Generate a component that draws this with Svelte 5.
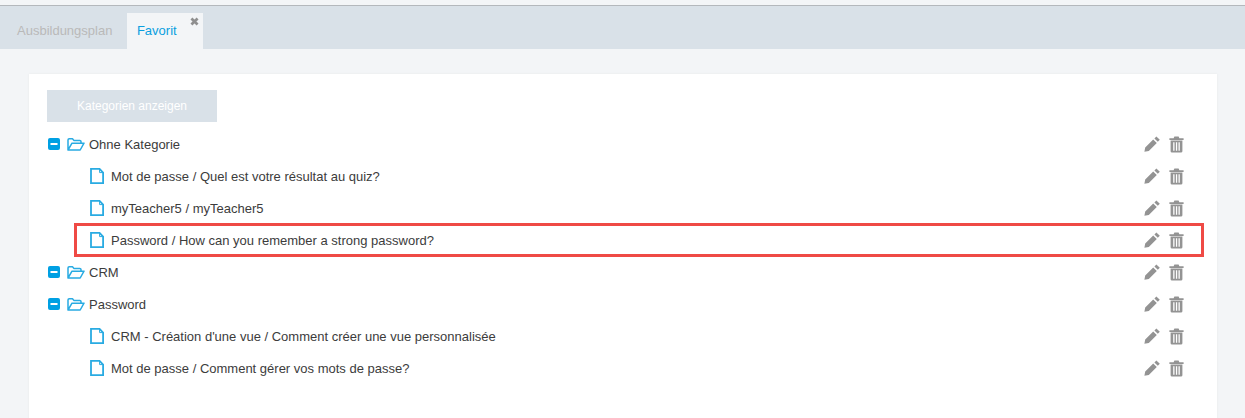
<script>
  const rows = [
    { label: 'Ohne Kategorie', folder: true },
    { label: 'Mot de passe / Quel est votre résultat au quiz?' },
    { label: 'myTeacher5 / myTeacher5' },
    { label: 'Password / How can you remember a strong password?', marked: true },
    { label: 'CRM', folder: true },
    { label: 'Password', folder: true },
    { label: "CRM - Création d'une vue / Comment créer une vue personnalisée" },
    { label: 'Mot de passe / Comment gérer vos mots de passe?' }
  ];
</script>

<div class="page">
  <nav class="tabs">
    <span class="tab">Ausbildungsplan</span>
    <span class="tab active">
      Favorit
      <svg class="close" viewBox="0 0 10 10" width="9" height="9" aria-hidden="true">
        <path d="M1.6 1.6 8.4 8.4M8.4 1.6 1.6 8.4" stroke="#8f8f8f" stroke-width="3" fill="none" />
      </svg>
    </span>
  </nav>

  <main class="content">
    <section class="card">
      <button class="toggle" type="button">Kategorien anzeigen</button>

      <ul class="tree">
        {#each rows as row}
          <li class="row" class:child={!row.folder} class:marked={row.marked}>
            {#if row.folder}
              <svg class="minus" viewBox="0 0 12 12" width="12" height="12" aria-hidden="true">
                <rect width="12" height="12" rx="2" fill="#00a0e3" />
                <rect x="2.5" y="5" width="7" height="2" fill="#fff" />
              </svg>
              <svg class="folder" viewBox="0 0 18 13" width="18" height="13" aria-hidden="true">
                <path d="M1 12V2q0-1.2 1.2-1.2h3.3l1.3 1.6h6q1.2 0 1.2 1.2v1.6M1 12h12.2l3.8-6.8H5z" fill="none" stroke="#29abe2" stroke-width="1.5" stroke-linejoin="round" />
              </svg>
            {:else}
              <svg class="file" viewBox="0 0 14 16" width="14" height="16" aria-hidden="true">
                <path d="M1 .9h8.6l3.5 3.6v10.6H1z" fill="none" stroke="#29abe2" stroke-width="1.8" />
                <path d="M9.6 1v3.6h3.4" fill="none" stroke="#29abe2" stroke-width="1" />
              </svg>
            {/if}
            <span class="label">{row.label}</span>
            <span class="actions">
              <svg viewBox="0 0 16 16" width="16" height="16" aria-hidden="true">
                <path d="M12.4.4 15.8 3.8 13.8 5.8 10.4 2.4ZM9.2 3.4 12.8 7 4.8 15 .4 15.8 1.2 11.4Z" fill="#939393" />
              </svg>
              <svg viewBox="0 0 15 17" width="15" height="17" aria-hidden="true">
                <path d="M4.6 2.2 5.4.4h4.2l.8 1.8h4.2v1.7H.4V2.2Z" fill="#939393" />
                <path d="M1.6 4.6h11.8v10.6q0 1.4-1.4 1.4H3q-1.4 0-1.4-1.4ZM4.2 6.2v8.6h1.3V6.2ZM6.9 6.2v8.6h1.3V6.2ZM9.5 6.2v8.6h1.3V6.2Z" fill="#939393" fill-rule="evenodd" />
              </svg>
            </span>
          </li>
        {/each}
      </ul>
    </section>
  </main>
</div>

<style>
  :global(body) {
    margin: 0;
    background: #f3f5f7;
  }

  .page {
    display: flow-root;
    height: 418px;
    overflow: hidden;
    font-family: "Liberation Sans", Roboto, sans-serif;
    font-size: 13px;
    color: #3c3c3c;
  }

  .tabs {
    display: flex;
    align-items: flex-end;
    height: 43px;
    margin-top: 5px;
    border-top: 1px solid #b4b8bc;
    background: #d9e1e8;
  }

  .tab {
    display: flex;
    align-items: center;
    height: 36px;
    padding: 0 15px 2px 17px;
    box-sizing: border-box;
    color: #b9b9b9;
  }

  .tab.active {
    position: relative;
    width: 76px;
    padding: 0 0 2px 9.5px;
    background: #f3f5f7;
    color: #0a9fe0;
  }

  .close {
    position: absolute;
    top: 4px;
    right: 4px;
  }

  .content {
    padding: 25px 28px 0 29px;
  }

  .card {
    height: 360px;
    padding: 16px 14px 0 18px;
    background: #fff;
    box-shadow: 0 0 2px #e6e8ea;
  }

  .toggle {
    display: block;
    width: 170px;
    height: 32px;
    padding: 0;
    border: 0;
    background: #d9e1e8;
    color: #fff;
    font: inherit;
    font-size: 12px;
  }

  .tree {
    margin: 6px 0 0;
    padding: 0;
    list-style: none;
  }

  .row {
    display: flex;
    align-items: center;
    height: 32px;
    padding-left: 1px;
  }

  .row.child {
    margin-left: 28px;
    padding-left: 15px;
  }

  .row.marked {
    outline: 3px solid #ef4a45;
    outline-offset: -2px;
  }

  .minus {
    margin-right: 7px;
  }

  .folder {
    margin-right: 4px;
  }

  .file {
    margin-right: 7px;
  }

  .actions {
    display: flex;
    align-items: center;
    gap: 9px;
    margin-left: auto;
    padding-right: 19px;
  }
</style>
